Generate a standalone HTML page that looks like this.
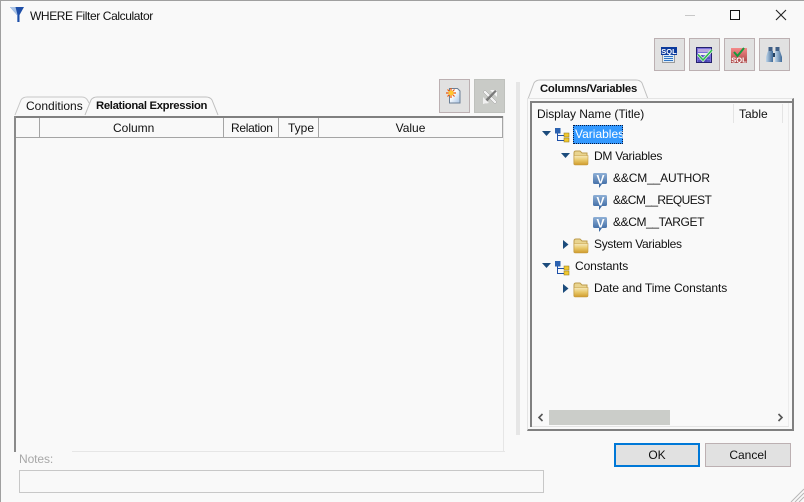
<!DOCTYPE html>
<html><head><meta charset="utf-8"><style>
html,body{margin:0;padding:0;background:#f9f9f9}
#r{position:relative;width:804px;height:502px;overflow:hidden;background:#f9f9f9;font:12px "Liberation Sans",sans-serif;color:#111}
#r div,#r svg{position:absolute;box-sizing:border-box}
.t{white-space:nowrap;line-height:16px;height:16px}
.c{text-align:center}
.b{background:#e1e1e1;border:1px solid #bcb0b2}
.l{background:#a5a5a5}
</style></head><body><div id="r">
<svg width="0" height="0" style="left:0;top:0"><defs>
<linearGradient id="fg" x1="0" y1="0" x2="0" y2="1"><stop offset="0" stop-color="#f6e9bd"/><stop offset=".5" stop-color="#e8c767"/><stop offset="1" stop-color="#cf9a2c"/></linearGradient>
<linearGradient id="vg" x1="0" y1="0" x2="0" y2="1"><stop offset="0" stop-color="#8fb0d6"/><stop offset="1" stop-color="#2c5c9a"/></linearGradient>
<linearGradient id="bg" x1="0" y1="0" x2="1" y2="0"><stop offset="0" stop-color="#c0d6ea"/><stop offset="1" stop-color="#3f6a98"/></linearGradient>
<linearGradient id="pg" x1="0" y1="0" x2="1" y2="1"><stop offset=".4" stop-color="#f8fbff"/><stop offset="1" stop-color="#a9c4e4"/></linearGradient>
<linearGradient id="rg" x1="0" y1="0" x2="0" y2="1"><stop offset="0" stop-color="#f58a8a"/><stop offset="1" stop-color="#a84444"/></linearGradient>
<g id="fo"><path d="M1 3Q1 1 3 1H7L9 3H14V14H1Z" fill="#e9d48f" stroke="#bd9c4c"/><path d="M1 5.500H15V13.500Q15 15 13.500 15H2.500Q1 15 1 13.500Z" fill="url(#fg)" stroke="#c39a3e" stroke-width=".6"/></g>
<g id="vb"><path d="M2.500 2H13.500Q15 2 15 3.500V11.500Q15 13 13.500 13H10L7 17V13H2.500Q1 13 1 11.500V3.500Q1 2 2.500 2Z" fill="url(#vg)"/><text x="8.500" y="12.500" text-anchor="middle" font-family="Liberation Sans" font-size="12" font-weight="bold" fill="#fff">V</text></g>
<g id="tr"><path d="M2.500 4V12.500H9M2.500 7.500H9" fill="none" stroke="#1d4fa8"/><rect x="0" y="0" width="5.500" height="5.500" fill="#2c62b0"/><rect x="9" y="5" width="5" height="4" fill="#f0c830" stroke="#8a7018" stroke-width=".5"/><rect x="9" y="10" width="5" height="4" fill="#f0c830" stroke="#8a7018" stroke-width=".5"/></g>
</defs></svg>
<div style="left:0;top:0;width:804px;height:1px;background:#a0a0a0"></div>
<div style="left:0;top:0;width:1px;height:502px;background:#a0a0a0"></div>

<svg style="left:9px;top:6px" width="16" height="17" viewBox="0 0 16 17"><path d="M1 1H15L10.500 9V16H8V9Z" fill="#1f4fa8"/><path d="M1 1H6.500L8.500 9V16H8V9Z" fill="#a9c3e6"/></svg>
<div class="t" style="left:30px;top:8px;letter-spacing:-.4px">WHERE Filter Calculator</div>

<div style="left:685px;top:15px;width:10px;height:1px;background:#c8c8c8"></div>
<div style="left:730px;top:10px;width:10px;height:10px;border:1px solid #111"></div>
<svg style="left:775px;top:9px" width="12" height="12"><path d="M1 1L11 11M11 1L1 11" stroke="#222" stroke-width="1.100"/></svg>

<div class="b" style="left:654px;top:38px;width:31px;height:33px"></div>
<svg style="left:661px;top:47px" width="16" height="16" viewBox="0 0 16 16"><rect x="1" y="6" width="13" height="10" fill="#9a9a9a"/><rect x="2" y="8" width="11" height="7" fill="#dcebf8"/><path d="M3 9.500H12M3 11.500H12M3 13.500H12" stroke="#2f74c4"/><rect width="16" height="8" fill="#0b3a9c"/><text x="8" y="6.800" text-anchor="middle" font-family="Liberation Sans" font-size="7.500" font-weight="bold" fill="#fff">SQL</text></svg>
<div class="b" style="left:689px;top:38px;width:31px;height:33px"></div>
<svg style="left:696px;top:47px" width="17" height="16" viewBox="0 0 17 16"><rect x=".5" y=".5" width="15" height="15" fill="#7b6fda" stroke="#24226e"/><rect x="2" y="2" width="12" height="3" fill="#b9a8e0"/><rect x="2" y="6" width="12" height="2" fill="#eeeeee"/><path d="M2 11H14M2 14H14M6 8V15M10 8V15" stroke="#3a3aa8"/><path d="M2 7.500L7 13L16 3" fill="none" stroke="#dff5e0" stroke-width="3"/><path d="M2 7.500L7 13L16 3" fill="none" stroke="#2cb84e" stroke-width="1.500"/></svg>
<div class="b" style="left:724px;top:38px;width:31px;height:33px"></div>
<svg style="left:731px;top:47px" width="16" height="16" viewBox="0 0 16 16"><rect y="1" width="16" height="15" fill="url(#rg)"/><path d="M3 5L6.500 9L13 1" fill="none" stroke="#159a3c" stroke-width="2"/><text x="8" y="15.500" text-anchor="middle" font-family="Liberation Sans" font-size="7.500" font-weight="bold" fill="#fff">SQL</text></svg>
<div class="b" style="left:759px;top:38px;width:31px;height:33px"></div>
<svg style="left:766px;top:47px" width="16" height="16" viewBox="0 0 16 16"><rect x="2.500" y="0" width="4" height="5" fill="#3f5f86"/><rect x="9.500" y="0" width="4" height="5" fill="#3f5f86"/><path d="M2 4H7V15H0V10Z" fill="url(#bg)"/><path d="M9 4H14L16 10V15H9Z" fill="url(#bg)"/><rect x="7" y="6" width="2" height="4" fill="#23405f"/></svg>

<div class="b" style="left:439px;top:79px;width:31px;height:34px"></div>
<svg style="left:446px;top:88px" width="15" height="16" viewBox="0 0 15 16"><path d="M3.500 .5H11.500L14 3V15H3.500Z" fill="url(#pg)" stroke="#6c7f96"/><path d="M5 0V10M0 5H10M1.500 1.500L8.500 8.500M8.500 1.500L1.500 8.500" stroke="#f05a08" stroke-width="1.200"/><circle cx="5" cy="5" r="2.500" fill="#ffc830"/></svg>
<div style="left:474px;top:79px;width:31px;height:34px;background:#c9cbc7;border:1px solid #bfc1bd"></div>
<svg style="left:482px;top:89px" width="16" height="15" viewBox="0 0 16 15"><path d="M1 3L3 1L15 13L13 15Z" fill="#f2f2f2" stroke="#9a9a9a" stroke-width=".5"/><path d="M8 1H15V8Z" fill="#f6f6f6"/><path d="M15 2L13 1L1 13L3 15Z" fill="#7a7a7a"/><path d="M1 8L7 14L1 15Z" fill="#f0f0f0"/></svg>

<svg style="left:14px;top:96px" width="220" height="22" viewBox="0 0 220 22"><path d="M1 19L7 4Q9 1 13 1H68Q72 1 74 5L75 7" fill="none" stroke="#c8c8c8"/><path d="M71 19L77 4Q79 1 83 1H192Q196 1 198 4L204 19" fill="#f9f9f9" stroke="#c0c0c0"/></svg>
<div class="t" style="left:26px;top:98px">Conditions</div>
<div class="t" style="left:96px;top:98px;font-size:11.300px;font-weight:bold;letter-spacing:-.33px">Relational Expression</div>

<div style="left:14px;top:116px;width:490px;height:2px;background:#808080"></div>
<div style="left:14px;top:116px;width:2px;height:336px;background:#8a8a8a"></div>
<div style="left:503px;top:116px;width:1px;height:336px;background:#e6e6e6"></div>
<div style="left:72px;top:451px;width:433px;height:1px;background:#e6e6e6"></div>
<div class="l" style="left:16px;top:137px;width:486px;height:1px"></div>
<div class="l" style="left:39px;top:118px;width:1px;height:20px"></div>
<div class="l" style="left:223px;top:118px;width:1px;height:20px"></div>
<div class="l" style="left:278px;top:118px;width:1px;height:20px"></div>
<div class="l" style="left:318px;top:118px;width:1px;height:20px"></div>
<div class="l" style="left:502px;top:118px;width:1px;height:20px"></div>
<div class="t" style="left:113px;top:120px">Column</div>
<div class="t" style="left:231px;top:120px;letter-spacing:-.3px">Relation</div>
<div class="t c" style="left:279px;top:120px;width:44px">Type</div>
<div class="t c" style="left:319px;top:120px;width:183px">Value</div>

<div class="t" style="left:19px;top:451px;color:#a8a8a8;letter-spacing:-.1px">Notes:</div>
<div style="left:19px;top:470px;width:525px;height:23px;border:1px solid #c8c8c8"></div>

<div style="left:516px;top:82px;width:4px;height:353px;background:#e6e6e6"></div>

<svg style="left:527px;top:79px" width="126" height="21" viewBox="0 0 126 21"><path d="M1 20L7 4Q9 1 13 1H109Q113 1 115 4L121 20" fill="#f9f9f9" stroke="#c0c0c0"/></svg>
<div class="t" style="left:540px;top:81px;font-size:11.300px;font-weight:bold;letter-spacing:-.24px">Columns/Variables</div>
<div style="left:527px;top:98px;width:267px;height:333px;border:1px solid #e4e4e4;border-bottom:2px solid #808080;border-right:2px solid #808080"></div>
<div style="left:530px;top:101px;width:262px;height:326px;border:solid #808080;border-width:2px 0 0 2px"></div>
<div style="left:532px;top:426px;width:257px;height:1px;background:#e4e4e4"></div>
<div style="left:788px;top:103px;width:1px;height:323px;background:#ececec"></div>
<div style="left:733px;top:104px;width:1px;height:19px;background:#e4e4e4"></div>
<div style="left:782px;top:104px;width:1px;height:19px;background:#e4e4e4"></div>
<div class="t" style="left:537px;top:106px;letter-spacing:-.05px">Display Name (Title)</div>
<div class="t" style="left:739px;top:106px">Table</div>

<svg style="left:542px;top:131px" width="10" height="6"><path d="M0 0H9L4.500 5Z" fill="#1c4c7c"/></svg>
<svg style="left:555px;top:128px" width="15" height="15"><use href="#tr"/></svg>
<div style="left:573px;top:125px;width:50px;height:19px;background:#3399ff;outline:1px dotted #0a1a40;outline-offset:-1px"></div>
<div class="t" style="left:575px;top:126px;color:#fff">Variables</div>

<svg style="left:561px;top:153px" width="10" height="6"><path d="M0 0H9L4.500 5Z" fill="#1c4c7c"/></svg>
<svg style="left:573px;top:150px" width="17" height="16"><use href="#fo"/></svg>
<div class="t" style="left:594px;top:148px;letter-spacing:-.25px">DM Variables</div>

<svg style="left:592px;top:171px" width="16" height="18"><use href="#vb"/></svg>
<div class="t" style="left:613px;top:170px;letter-spacing:-.15px">&amp;&amp;CM__AUTHOR</div>
<svg style="left:592px;top:193px" width="16" height="18"><use href="#vb"/></svg>
<div class="t" style="left:613px;top:192px;letter-spacing:-.6px">&amp;&amp;CM__REQUEST</div>
<svg style="left:592px;top:215px" width="16" height="18"><use href="#vb"/></svg>
<div class="t" style="left:613px;top:214px;letter-spacing:-.4px">&amp;&amp;CM__TARGET</div>

<svg style="left:563px;top:240px" width="7" height="9"><path d="M0 0V9L5.500 4.500Z" fill="#1c4c7c"/></svg>
<svg style="left:573px;top:238px" width="17" height="16"><use href="#fo"/></svg>
<div class="t" style="left:594px;top:236px;letter-spacing:-.3px">System Variables</div>

<svg style="left:542px;top:263px" width="10" height="6"><path d="M0 0H9L4.500 5Z" fill="#1c4c7c"/></svg>
<svg style="left:555px;top:261px" width="15" height="15"><use href="#tr"/></svg>
<div class="t" style="left:575px;top:258px;letter-spacing:-.1px">Constants</div>

<svg style="left:563px;top:284px" width="7" height="9"><path d="M0 0V9L5.500 4.500Z" fill="#1c4c7c"/></svg>
<svg style="left:573px;top:282px" width="17" height="16"><use href="#fo"/></svg>
<div class="t" style="left:594px;top:280px;letter-spacing:-.1px">Date and Time Constants</div>

<div style="left:549px;top:410px;width:121px;height:15px;background:#cbcdc9"></div>
<svg style="left:537px;top:413px" width="7" height="9"><path d="M5.500 1L2 4.500L5.500 8" fill="none" stroke="#555" stroke-width="1.600"/></svg>
<svg style="left:777px;top:413px" width="7" height="9"><path d="M1.500 1L5 4.500L1.500 8" fill="none" stroke="#555" stroke-width="1.600"/></svg>

<div style="left:614px;top:443px;width:86px;height:24px;background:#e1e1e1;border:2px solid #0078d7"></div>
<div class="t c" style="left:614px;top:447px;width:86px">OK</div>
<div class="b" style="left:705px;top:443px;width:86px;height:24px"></div>
<div class="t c" style="left:705px;top:447px;width:86px">Cancel</div>

<svg style="left:790px;top:488px" width="14" height="14"><path d="M14 1L1 14M14 5L5 14M14 9L9 14" stroke="#b8b8b8"/></svg>
</div></body></html>
